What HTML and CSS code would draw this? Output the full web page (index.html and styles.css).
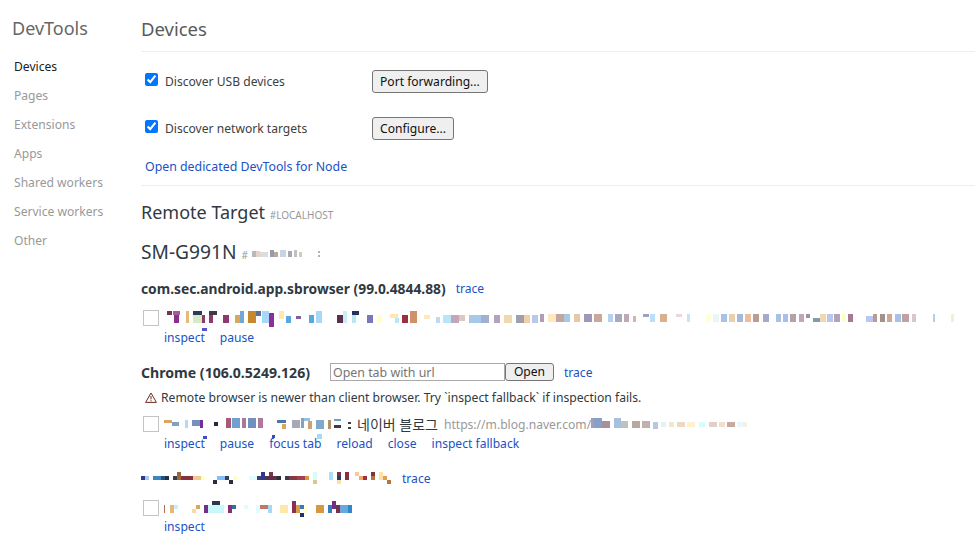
FILE: index.html
```html
<!DOCTYPE html>
<html lang="en">
<head>
    <meta charset="UTF-8">
    <title>Inspect with Chrome Developer Tools</title>
    <link rel="stylesheet" href="styles.css">
</head>
<body>
    <aside class="sidebar">
        <h1 class="brand">DevTools</h1>
        <ul class="nav">
            <li class="nav-item selected">Devices</li>
            <li class="nav-item">Pages</li>
            <li class="nav-item">Extensions</li>
            <li class="nav-item">Apps</li>
            <li class="nav-item">Shared workers</li>
            <li class="nav-item">Service workers</li>
            <li class="nav-item">Other</li>
        </ul>
    </aside>

    <main class="content">
        <header class="page-head">Devices</header>

        <section class="settings">
            <div class="setting">
                <label class="check"><input type="checkbox" checked>Discover USB devices</label>
                <button class="btn" type="button">Port forwarding...</button>
            </div>
            <div class="setting">
                <label class="check"><input type="checkbox" checked>Discover network targets</label>
                <button class="btn" type="button">Configure...</button>
            </div>
            <a class="link node-link" href="#">Open dedicated DevTools for Node</a>
        </section>

        <section class="targets">
            <h2 class="targets-title">Remote Target <span class="tag">#LOCALHOST</span></h2>
            <h3 class="device-name">SM-G991N
                <span class="tag">#</span>
                <svg class="blur serial" width="72" height="10">
                    <rect x="0" y="2" width="4" height="6" fill="#b9b9b9"/><rect x="4" y="2" width="4" height="6" fill="#e7d3c4"/>
                    <rect x="8" y="3" width="8" height="5" fill="#dcdcdc"/><rect x="18" y="1" width="4" height="7" fill="#9a9aa8"/>
                    <rect x="22" y="3" width="4" height="5" fill="#b7a9a0"/><rect x="28" y="1" width="6" height="7" fill="#c8d4e4"/>
                    <rect x="36" y="2" width="4" height="6" fill="#a8a8b0"/><rect x="42" y="1" width="3" height="7" fill="#bfbfc4"/>
                    <rect x="47" y="3" width="3" height="5" fill="#d8c8c0"/><rect x="66" y="2" width="2" height="2" fill="#b0b0b0"/>
                    <rect x="66" y="6" width="2" height="2" fill="#b0b0b0"/>
                </svg>
            </h3>

            <div class="browser">
                <div class="browser-head">
                    <span class="browser-name">com.sec.android.app.sbrowser (99.0.4844.88)</span>
                    <a class="link" href="#">trace</a>
                </div>
                <div class="row">
                    <div class="thumb"></div>
                    <div class="row-body">
                        <svg class="blur blur-long" width="790" height="14">
                            <rect x="36" y="17" width="5" height="3" fill="#5a50d0"/>
                            <rect x="1" y="0" width="5" height="4" fill="#7b3058"/><rect x="7" y="0" width="7" height="4" fill="#a85a98"/><rect x="8" y="4" width="5" height="8" fill="#8b2f8b"/>
                            <rect x="20" y="0" width="3" height="12" fill="#e8b878"/><rect x="27" y="0" width="9" height="4" fill="#2d3a5c"/><rect x="27" y="4" width="9" height="8" fill="#d3ecc4"/>
                            <rect x="36" y="4" width="3" height="8" fill="#8c3a70"/><rect x="43" y="0" width="8" height="4" fill="#3c3c44"/><rect x="43" y="4" width="4" height="8" fill="#8c3a70"/>
                            <rect x="57" y="4" width="6" height="8" fill="#8c3a70"/><rect x="69" y="4" width="5" height="8" fill="#d8a860"/><rect x="74" y="0" width="4" height="12" fill="#70a8d8"/>
                            <rect x="82" y="0" width="8" height="12" fill="#c88830"/><rect x="90" y="0" width="5" height="5" fill="#5a7098"/><rect x="96" y="0" width="7" height="12" fill="#a8d8f8"/>
                            <rect x="103" y="2" width="5" height="14" fill="#8c2f98"/><rect x="113" y="0" width="5" height="8" fill="#ffe8b0"/><rect x="120" y="5" width="5" height="7" fill="#58a8e0"/>
                            <rect x="130" y="5" width="5" height="3" fill="#80609c"/><rect x="143" y="4" width="5" height="8" fill="#58a8e0"/><rect x="150" y="0" width="6" height="12" fill="#a8d8f8"/>
                            <rect x="171" y="4" width="6" height="8" fill="#5a3050"/><rect x="177" y="0" width="4" height="12" fill="#c8f0f0"/><rect x="186" y="0" width="7" height="4" fill="#28305c"/>
                            <rect x="186" y="4" width="4" height="8" fill="#b8e8f0"/><rect x="201" y="4" width="6" height="8" fill="#7a78b8"/><rect x="211" y="4" width="5" height="8" fill="#ffffc8"/>
                            <rect x="224" y="3" width="8" height="4" fill="#ffe8b0"/><rect x="229" y="7" width="4" height="5" fill="#b8e8f0"/><rect x="236" y="4" width="6" height="8" fill="#983040"/>
                            <rect x="244" y="0" width="7" height="12" fill="#d09068"/><rect x="258" y="4" width="6" height="4" fill="#ffe8c0"/><rect x="270" y="6" width="4" height="6" fill="#c0d8f0"/>
                            <rect x="277" y="4" width="8" height="8" fill="#b8e4fc"/><rect x="285" y="4" width="8" height="8" fill="#c0a8b8"/><rect x="293" y="4" width="6" height="6" fill="#e0c8c0"/>
                            <rect x="303" y="4" width="12" height="8" fill="#a8c8e8"/><rect x="315" y="4" width="8" height="8" fill="#9fb0d0"/><rect x="328" y="4" width="6" height="8" fill="#b8a0c0"/>
                            <rect x="338" y="4" width="8" height="8" fill="#f0d8b0"/><rect x="350" y="4" width="8" height="8" fill="#a0a0a8"/><rect x="358" y="4" width="6" height="8" fill="#f0d0a8"/>
                            <rect x="366" y="4" width="6" height="8" fill="#b8c8e8"/><rect x="374" y="3" width="4" height="8" fill="#a8a0b8"/><rect x="382" y="3" width="8" height="8" fill="#ffe8c0"/>
                            <rect x="390" y="3" width="8" height="8" fill="#c0a8a0"/><rect x="398" y="3" width="6" height="8" fill="#a8c8e8"/><rect x="408" y="3" width="6" height="8" fill="#e8c8a8"/>
                            <rect x="418" y="3" width="8" height="8" fill="#a098b8"/><rect x="428" y="3" width="8" height="8" fill="#c8a898"/><rect x="442" y="3" width="5" height="8" fill="#b8d0ec"/>
                            <rect x="449" y="3" width="7" height="8" fill="#a8a8c0"/><rect x="458" y="3" width="5" height="8" fill="#c0a8b8"/><rect x="467" y="5" width="3" height="6" fill="#d0b8a8"/>
                            <rect x="477" y="3" width="6" height="3" fill="#a0a0c0"/><rect x="484" y="3" width="5" height="8" fill="#b8e0fc"/><rect x="494" y="3" width="7" height="8" fill="#d8b090"/>
                            <rect x="510" y="3" width="6" height="3" fill="#e8d8d8"/><rect x="521" y="3" width="3" height="8" fill="#c0e4fc"/><rect x="540" y="3" width="5" height="8" fill="#ffffd8"/>
                            <rect x="547" y="3" width="6" height="8" fill="#e8f8f0"/><rect x="555" y="3" width="6" height="8" fill="#a8c4e4"/><rect x="563" y="3" width="6" height="8" fill="#e8d0a8"/>
                            <rect x="571" y="3" width="6" height="8" fill="#a8b8d8"/><rect x="579" y="3" width="6" height="8" fill="#e8c0a0"/><rect x="587" y="3" width="6" height="8" fill="#b8a090"/>
                            <rect x="597" y="3" width="6" height="8" fill="#a8a8c8"/><rect x="610" y="3" width="5" height="8" fill="#a8c0e8"/><rect x="617" y="3" width="5" height="8" fill="#a8c0e8"/>
                            <rect x="624" y="3" width="6" height="8" fill="#b8a0a8"/><rect x="633" y="3" width="5" height="8" fill="#c0a8b0"/><rect x="640" y="3" width="4" height="4" fill="#a090a0"/>
                            <rect x="647" y="7" width="7" height="4" fill="#8898b0"/><rect x="654" y="3" width="6" height="8" fill="#f0d8b0"/><rect x="661" y="3" width="6" height="8" fill="#b8c8e8"/>
                            <rect x="668" y="3" width="6" height="8" fill="#b8a0b8"/><rect x="675" y="3" width="5" height="8" fill="#ffffc8"/><rect x="682" y="3" width="5" height="8" fill="#a87890"/>
                            <rect x="700" y="5" width="7" height="6" fill="#b8c8f0"/><rect x="707" y="3" width="4" height="8" fill="#b89c90"/><rect x="714" y="3" width="5" height="8" fill="#a09090"/>
                            <rect x="721" y="3" width="5" height="8" fill="#d0a890"/><rect x="729" y="3" width="6" height="8" fill="#a8c0e8"/><rect x="736" y="3" width="7" height="8" fill="#c0a0a0"/>
                            <rect x="746" y="3" width="4" height="8" fill="#d8c8c8"/><rect x="767" y="3" width="2" height="8" fill="#b0d0f0"/><rect x="785" y="3" width="3" height="8" fill="#f0f0d8"/>
                        </svg>
                        <div class="actions">
                            <a class="link" href="#">inspect</a>
                            <a class="link" href="#">pause</a>
                        </div>
                    </div>
                </div>
            </div>

            <div class="browser">
                <div class="browser-head">
                    <span class="browser-name name-wide">Chrome (106.0.5249.126)</span>
                    <span class="open-tab">
                        <input class="url-input" type="text" placeholder="Open tab with url">
                        <button class="btn btn-open" type="button">Open</button>
                    </span>
                    <a class="link" href="#">trace</a>
                </div>
                <div class="warning">
                    <svg width="12" height="11" viewBox="0 0 12 11"><path d="M6 1 L11.4 10.4 H0.6 Z" fill="none" stroke="#6e2b20"/><path d="M6 4 V7.4 M6 8.2 V9.4" stroke="#6e2b20"/></svg>
                    Remote browser is newer than client browser. Try `inspect fallback` if inspection fails.
                </div>
                <div class="row row-tight">
                    <div class="thumb"></div>
                    <div class="row-body">
                        <div class="page-line">
                            <svg class="blur" width="140" height="12">
                                <rect x="39" y="18" width="4" height="3" fill="#4050c0"/><rect x="108" y="17" width="3" height="3" fill="#3050c0"/><rect x="153" y="16" width="5" height="5" fill="#a8d8f8"/>
                                <rect x="0" y="2" width="8" height="3" fill="#d8a860"/><rect x="8" y="4" width="7" height="4" fill="#80a0c8"/><rect x="21" y="2" width="3" height="8" fill="#b8d8f0"/>
                                <rect x="28" y="2" width="8" height="6" fill="#7890c0"/><rect x="36" y="2" width="3" height="8" fill="#70309c"/><rect x="50" y="4" width="4" height="4" fill="#28283c"/>
                                <rect x="62" y="0" width="5" height="10" fill="#a85878"/><rect x="68" y="0" width="8" height="10" fill="#70a0d0"/><rect x="78" y="0" width="4" height="10" fill="#a87898"/>
                                <rect x="84" y="0" width="8" height="10" fill="#7090c0"/><rect x="94" y="0" width="5" height="10" fill="#b07898"/><rect x="113" y="2" width="9" height="3" fill="#4c78a8"/>
                                <rect x="118" y="6" width="4" height="5" fill="#d8a860"/><rect x="128" y="2" width="8" height="8" fill="#a8a8b8"/><rect x="137" y="0" width="3" height="10" fill="#88a0c0"/>
                            </svg>
                            <svg class="blur" width="51" height="12">
                                <rect x="0" y="0" width="6" height="3" fill="#98c0e0"/><rect x="4" y="3" width="4" height="8" fill="#d0a070"/><rect x="12" y="2" width="8" height="9" fill="#80a8c8"/>
                                <rect x="24" y="2" width="3" height="9" fill="#b09068"/><rect x="30" y="1" width="7" height="2" fill="#70a0c8"/><rect x="30" y="7" width="7" height="3" fill="#3c3c48"/>
                                <rect x="44" y="4" width="3" height="2" fill="#404040"/><rect x="44" y="9" width="3" height="2" fill="#404040"/>
                            </svg>
                            <span class="page-title">네이버 블로그</span>
                            <span class="page-url">https://m.blog.naver.com/</span>
                            <svg class="blur" width="156" height="12">
                                <rect x="0" y="0" width="3" height="10" fill="#a0a0b8"/><rect x="3" y="0" width="8" height="10" fill="#88a0c8"/><rect x="11" y="3" width="8" height="7" fill="#a89098"/>
                                <rect x="23" y="0" width="7" height="10" fill="#a8c0e0"/><rect x="30" y="3" width="7" height="7" fill="#c0c0c0"/><rect x="41" y="3" width="8" height="7" fill="#b8a8a0"/>
                                <rect x="51" y="3" width="8" height="7" fill="#c0b0b0"/><rect x="62" y="4" width="5" height="7" fill="#b8c8e0"/><rect x="70" y="4" width="5" height="5" fill="#e0f4f8"/>
                                <rect x="78" y="4" width="5" height="5" fill="#f0e8c8"/><rect x="86" y="4" width="8" height="5" fill="#f0d8c0"/><rect x="96" y="4" width="8" height="5" fill="#fff0d0"/>
                                <rect x="108" y="4" width="6" height="5" fill="#d8fcfc"/><rect x="118" y="4" width="8" height="5" fill="#e0d0c8"/><rect x="128" y="4" width="6" height="5" fill="#f0e0d0"/>
                                <rect x="136" y="4" width="8" height="5" fill="#c8a8a0"/><rect x="146" y="4" width="6" height="5" fill="#e8f8f8"/><rect x="152" y="4" width="4" height="5" fill="#f8f0e0"/>
                            </svg>
                        </div>
                        <div class="actions">
                            <a class="link" href="#">inspect</a>
                            <a class="link" href="#">pause</a>
                            <a class="link" href="#">focus tab</a>
                            <a class="link" href="#">reload</a>
                            <a class="link" href="#">close</a>
                            <a class="link" href="#">inspect fallback</a>
                        </div>
                    </div>
                </div>
            </div>

            <div class="browser">
                <div class="browser-head">
                    <svg class="blur" width="251" height="12">
                        <rect x="0" y="4" width="4" height="4" fill="#2d3a8c"/><rect x="4" y="4" width="4" height="4" fill="#a8c8f0"/><rect x="12" y="4" width="8" height="4" fill="#3888c0"/>
                        <rect x="20" y="4" width="4" height="4" fill="#2c5078"/><rect x="24" y="4" width="4" height="4" fill="#28303c"/><rect x="32" y="4" width="4" height="4" fill="#3c3c48"/>
                        <rect x="36" y="0" width="4" height="8" fill="#a06838"/><rect x="40" y="4" width="12" height="4" fill="#883040"/><rect x="52" y="4" width="8" height="4" fill="#f0c890"/>
                        <rect x="60" y="4" width="4" height="4" fill="#ffffc8"/><rect x="72" y="8" width="4" height="4" fill="#28303c"/><rect x="76" y="4" width="8" height="4" fill="#80c0f8"/>
                        <rect x="84" y="4" width="4" height="4" fill="#384050"/><rect x="88" y="8" width="4" height="4" fill="#28303c"/><rect x="92" y="4" width="4" height="4" fill="#ffffc8"/>
                        <rect x="108" y="4" width="8" height="4" fill="#e0fcfc"/><rect x="116" y="4" width="4" height="4" fill="#3c3c80"/><rect x="120" y="0" width="4" height="8" fill="#2d3a8c"/>
                        <rect x="124" y="4" width="12" height="4" fill="#5c3048"/><rect x="128" y="0" width="4" height="4" fill="#883040"/><rect x="136" y="4" width="4" height="4" fill="#28303c"/>
                        <rect x="144" y="4" width="4" height="4" fill="#3c3c48"/><rect x="148" y="4" width="8" height="4" fill="#883840"/><rect x="156" y="4" width="8" height="4" fill="#a04050"/>
                        <rect x="164" y="4" width="4" height="4" fill="#d8983c"/><rect x="172" y="0" width="4" height="8" fill="#d8fcfc"/><rect x="172" y="8" width="4" height="4" fill="#d8c890"/>
                        <rect x="188" y="0" width="4" height="8" fill="#a8e0fc"/><rect x="196" y="0" width="4" height="4" fill="#7c3040"/><rect x="196" y="4" width="4" height="4" fill="#2d3a6c"/>
                        <rect x="196" y="8" width="4" height="4" fill="#ffe0a8"/><rect x="204" y="0" width="4" height="8" fill="#883040"/><rect x="214" y="0" width="4" height="4" fill="#ffc890"/>
                        <rect x="218" y="4" width="4" height="4" fill="#f0a870"/><rect x="222" y="4" width="4" height="4" fill="#a03040"/><rect x="230" y="0" width="4" height="4" fill="#883040"/>
                        <rect x="230" y="4" width="4" height="4" fill="#b07840"/><rect x="238" y="0" width="4" height="8" fill="#ffe0a8"/><rect x="242" y="4" width="4" height="4" fill="#e0a050"/>
                        <rect x="246" y="8" width="4" height="4" fill="#b07840"/>
                    </svg>
                    <a class="link" href="#">trace</a>
                </div>
                <div class="row">
                    <div class="thumb"></div>
                    <div class="row-body">
                        <svg class="blur" width="190" height="13">
                            <rect x="0" y="4" width="1" height="8" fill="#b07050"/><rect x="6" y="4" width="4" height="8" fill="#e8b878"/><rect x="10" y="4" width="4" height="4" fill="#c8f0fc"/>
                            <rect x="28" y="8" width="4" height="4" fill="#f8d8a8"/><rect x="32" y="4" width="4" height="4" fill="#d8a860"/><rect x="40" y="4" width="4" height="8" fill="#703088"/>
                            <rect x="44" y="4" width="4" height="8" fill="#c8f8fc"/><rect x="48" y="0" width="8" height="4" fill="#2c3848"/><rect x="48" y="4" width="12" height="8" fill="#c8f8fc"/>
                            <rect x="64" y="4" width="4" height="8" fill="#883070"/><rect x="68" y="4" width="4" height="4" fill="#3070a8"/><rect x="80" y="4" width="4" height="4" fill="#e0fcfc"/>
                            <rect x="92" y="4" width="4" height="8" fill="#e0fcfc"/><rect x="96" y="4" width="8" height="4" fill="#c07868"/><rect x="104" y="4" width="4" height="8" fill="#a8d8f8"/>
                            <rect x="116" y="4" width="8" height="8" fill="#ffe8a8"/><rect x="128" y="0" width="4" height="12" fill="#883058"/><rect x="132" y="4" width="4" height="8" fill="#d8a040"/>
                            <rect x="136" y="4" width="4" height="4" fill="#3c78b8"/><rect x="136" y="12" width="4" height="4" fill="#28306c"/><rect x="140" y="4" width="4" height="8" fill="#ffffd8"/>
                            <rect x="152" y="4" width="8" height="8" fill="#d89840"/><rect x="164" y="4" width="4" height="8" fill="#3080c0"/><rect x="168" y="0" width="4" height="8" fill="#703088"/>
                            <rect x="172" y="4" width="4" height="8" fill="#783048"/><rect x="176" y="4" width="8" height="8" fill="#68a8e0"/><rect x="184" y="4" width="4" height="8" fill="#3088c8"/>
                        </svg>
                        <div class="actions">
                            <a class="link" href="#">inspect</a>
                        </div>
                    </div>
                </div>
            </div>
        </section>
    </main>
</body>
</html>
```

FILE: styles.css
```css
html {
    overflow: hidden;
}
body {
    margin: 0;
    display: flex;
    font-family: "Noto Sans", "Noto Sans CJK KR", sans-serif;
    font-size: 12.1px;
    color: #303942;
    background-color: #ffffff;
}
.sidebar {
    width: 141px;
    flex-shrink: 0;
}
.brand {
    font-size: 18px;
    font-weight: 400;
    color: #666;
    margin: 15px 0 0 12px;
    line-height: 27px;
}
.nav {
    list-style: none;
    margin: 10px 0 0 14px;
    padding: 0;
}
.nav-item {
    height: 29px;
    line-height: 29px;
    color: #999;
}
.nav-item.selected {
    color: #202020;
}
.content {
    flex: 1;
    min-width: 0;
}
.page-head {
    font-size: 18.5px;
    color: #5a5a5a;
    height: 51px;
    line-height: 58px;
    border-bottom: 1px solid #eee;
}
.settings {
    padding: 17px 0 9px 4px;
    border-bottom: 1px solid #eee;
}
.setting {
    display: flex;
    align-items: center;
    height: 24px;
    margin-bottom: 23px;
}
.check {
    display: flex;
    align-items: center;
    width: 227px;
    color: #404040;
}
.check input {
    margin: 0 7px 3px 0;
    width: 13px;
    height: 13px;
}
.btn {
    font-family: inherit;
    font-size: 12.1px;
    height: 23px;
    padding: 0 7px;
    color: #111;
    background-color: #efefef;
    border: 1px solid #767676;
    border-radius: 3px;
}
.link {
    color: #1a52c4;
    text-decoration: none;
}
.node-link {
    display: block;
    margin-top: -5px;
    font-size: 12.35px;
    line-height: 18px;
}
.targets-title {
    font-size: 18px;
    font-weight: 400;
    color: #303942;
    margin: 13px 0 0;
    line-height: 26px;
}
.tag {
    font-size: 10px;
    color: #999;
}
.device-name {
    font-size: 19.2px;
    font-weight: 400;
    margin: 11px 0 0;
    line-height: 26px;
}
.serial {
    margin-left: -1px;
}
.blur {
    display: block;
    flex-shrink: 0;
    overflow: visible;
}
.blur-long {
    margin-left: 2px;
}
.device-name .blur {
    display: inline-block;
}
.browser {
    margin-top: 10px;
}
.browser + .browser {
    margin-top: 15px;
}
.browser-head {
    display: flex;
    align-items: center;
    height: 20px;
}
.browser-name {
    font-size: 13.8px;
    font-weight: 700;
    color: #303942;
}
.name-wide {
    font-size: 14.1px;
}
.browser-head .link {
    margin-left: 10px;
}
.open-tab {
    display: flex;
    margin-left: 20px;
}
.url-input {
    width: 175px;
    height: 18px;
    box-sizing: border-box;
    padding: 0 2px;
    font-family: inherit;
    font-size: 12.4px;
    border: 1px solid #a9a9a9;
    border-radius: 0;
}
.url-input::placeholder {
    color: #757575;
}
.btn-open {
    width: 49px;
    height: 18px;
    line-height: 16px;
}
.warning {
    display: flex;
    align-items: center;
    gap: 4px;
    height: 18px;
    margin: 6px 0 0 4px;
    font-size: 12.17px;
    color: #303942;
}
.row {
    display: flex;
    gap: 5px;
    margin: 12px 0 0 2px;
}
.row-tight {
    margin-top: 10px;
}
.thumb {
    width: 16px;
    height: 16px;
    box-sizing: border-box;
    border: 1px solid #c4c4c4;
    flex-shrink: 0;
}
.row-body {
    min-width: 0;
    padding-top: 1px;
}
.page-line {
    display: flex;
    align-items: center;
    height: 14px;
}
.page-title {
    font-size: 14px;
    color: #303942;
    margin-left: 2px;
}
.page-url {
    color: #999;
    margin-left: 6px;
}
.actions {
    display: flex;
    gap: 15px;
    line-height: 18px;
    margin-top: 4px;
}
```
